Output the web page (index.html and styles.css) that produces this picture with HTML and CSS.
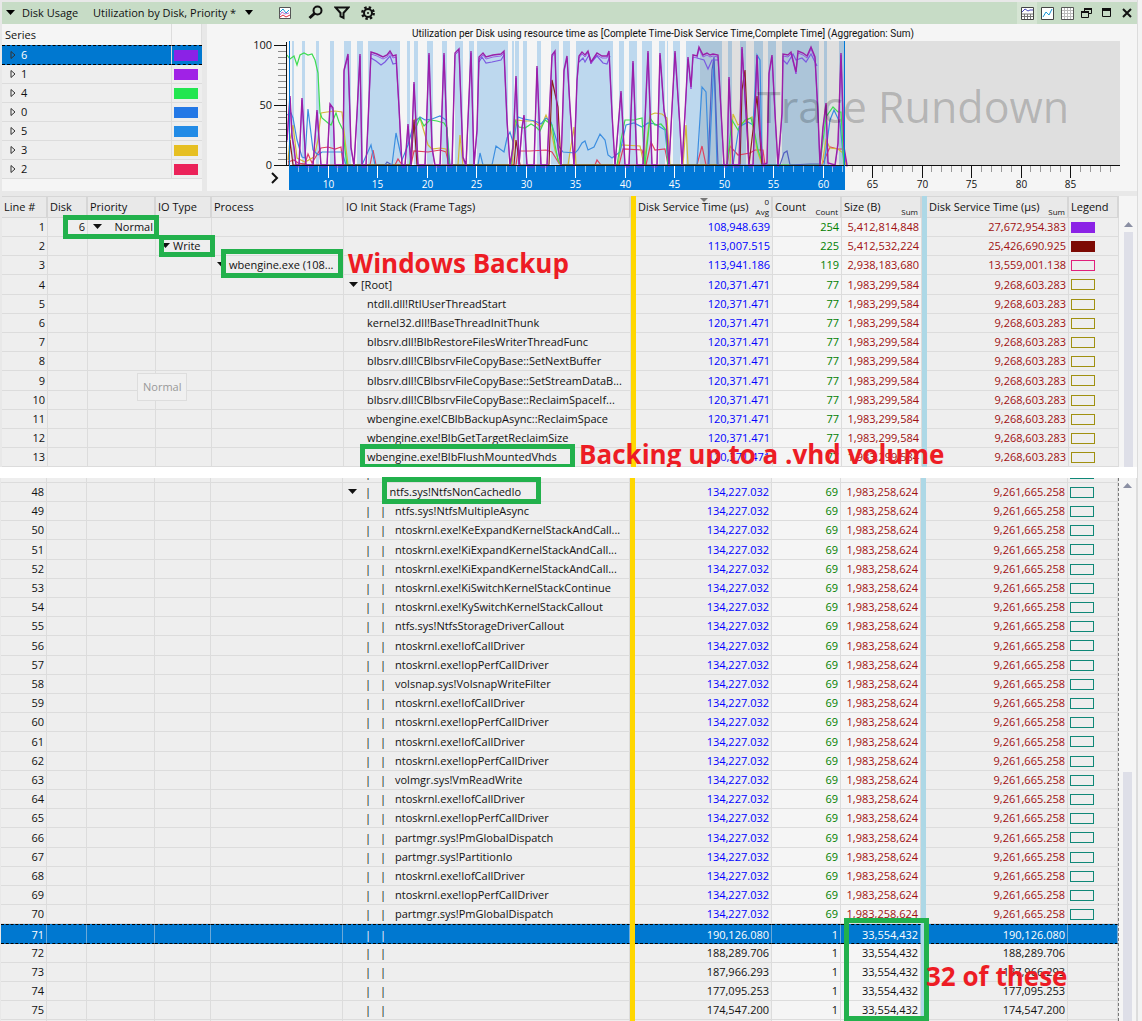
FILE: index.html
```html
<!DOCTYPE html>
<html lang="en">
<head>
<meta charset="utf-8">
<title>Disk Usage</title>
<link rel="stylesheet" href="styles.css">
</head>
<body>
<main class="window">
  <header class="toolbar">
    <button class="tool caret" aria-label="Collapse"><svg width="10" height="6"><path d="M0 0h9L4.500 5z"/></svg></button>
    <span class="title">Disk Usage</span>
    <button class="preset">Utilization by Disk, Priority * <svg width="10" height="6"><path d="M1 0h8L5 5z"/></svg></button>
    <div class="tools">
      <button class="tool" aria-label="Chart type"><svg width="14" height="14" fill="none"><path d="M1.500 1.500h11v11h-11z" fill="#fff" stroke="#555"/><path d="M2 6l3-3 3 4 3-3" stroke="#1b9ad6"/><path d="M2 9l2-3 3 2 4-1" stroke="#b06fd0"/><path d="M2 11l3-2 3 2 4-2" stroke="#e03040"/></svg></button>
      <button class="tool" aria-label="Search"><svg width="16" height="16" fill="none" stroke="#111"><circle cx="9.500" cy="5.500" r="4" stroke-width="2"/><path d="M6.500 8.500L1.500 13" stroke-width="3"/></svg></button>
      <button class="tool" aria-label="Filter"><svg width="16" height="14" fill="none" stroke="#111" stroke-width="2"><path d="M1.500 1.500h13L9.500 7v5l-3-1.500V7z"/></svg></button>
      <button class="tool" aria-label="Settings"><svg width="16" height="16" fill="none" stroke="#111"><circle cx="8" cy="8" r="4" stroke-width="2"/><circle cx="8" cy="8" r="5.700" stroke-width="2.400" stroke-dasharray="2.400 2.077"/><circle cx="8" cy="8" r="1" fill="#111" stroke="none"/></svg></button>
    </div>
    <div class="window-tools">
      <button class="tool active" aria-label="Graph and table"><svg width="13" height="13" fill="none"><path d="M.5.500h12v12H.5z" fill="#fff" stroke="#444"/><path d="M1 7h11M1 9.500h11M3.500 7v5M6.500 7v5M9.500 7v5" stroke="#777"/><path d="M1 5l3-3 3 2 2-1 3 0" stroke="#4a4ab8"/></svg></button>
      <button class="tool" aria-label="Graph"><svg width="13" height="13" fill="none"><path d="M.5.500h12v12H.5z" fill="#fff" stroke="#444"/><path d="M2 10l3-5 3 3 3-6" stroke="#1b9ad6"/></svg></button>
      <button class="tool" aria-label="Table"><svg width="13" height="13" fill="none"><path d="M.5.500h12v12H.5z" fill="#fff" stroke="#555"/><path d="M1 3.500h11M1 6.500h11M1 9.500h11M3.500 1v11M6.500 1v11M9.500 1v11" stroke="#bbb"/></svg></button>
      <button class="tool" aria-label="Restore"><svg width="12" height="12" fill="none" stroke="#111"><path d="M3.500 4V1.500h7v5H8"/><path d="M3 2h8M0 5h8" stroke-width="2"/><path d="M.5 5v5.500h7V5"/></svg></button>
      <button class="tool" aria-label="Maximize"><svg width="10" height="10" fill="none" stroke="#111"><path d="M.5 1v7.500h8V1"/><path d="M0 1.500h9" stroke-width="3"/></svg></button>
      <button class="tool" aria-label="Close"><svg width="10" height="10" fill="none" stroke="#111" stroke-width="2"><path d="M1 1l8 8M9 1L1 9"/></svg></button>
    </div>
  </header>
  <div class="upper">
    <div class="series">
      <table>
        <colgroup><col><col class="c-swatch"></colgroup>
        <thead><tr><th>Series</th><th></th></tr></thead>
        <tbody id="series"></tbody>
      </table>
    </div>
    <div class="graph"><svg id="graph" width="930" height="167" viewBox="207 24 930 167"></svg></div>
  </div>
  <section class="pane first">
    <table class="grid" id="top">
      <colgroup><col class="c-line"><col class="c-disk"><col class="c-priority"><col class="c-type"><col class="c-process"><col><col class="c-bar"><col class="c-avg"><col class="c-count"><col class="c-size"><col class="c-bar"><col class="c-sum"><col class="c-legend"></colgroup>
      <thead><tr><th>Line #</th><th>Disk</th><th>Priority</th><th>IO Type</th><th>Process</th><th>IO Init Stack (Frame Tags)</th><th class="gold"></th>
        <th><div class="head"><span>Disk Service Time (µs)</span><small>Avg</small><svg class="sort" width="8" height="4"><path d="M0 0h8L4 4z"/></svg><small class="order">0</small></div></th>
        <th><div class="head"><span>Count</span><small>Count</small></div></th><th><div class="head"><span>Size (B)</span><small>Sum</small></div></th><th class="sky"></th>
        <th><div class="head"><span>Disk Service Time (µs)</span><small>Sum</small></div></th><th>Legend</th></tr></thead>
      <tbody></tbody>
    </table>
    <div class="scroll"><svg width="9" height="5"><path d="M4.500 0L9 5H0z"/></svg><i></i></div>
    <div class="box box-disk"></div><div class="box box-write"></div><div class="box box-process"></div><div class="box box-flush"></div>
    <p class="note note-backup">Windows Backup</p>
    <p class="note note-vhd">Backing up to a .vhd volume</p>
    <span class="drag">Normal</span>
  </section>
  <section class="pane second">
    <div class="clip">
      <table class="grid" id="bottom">
        <colgroup><col class="c-line"><col class="c-disk"><col class="c-priority"><col class="c-type"><col class="c-process"><col><col class="c-bar"><col class="c-avg"><col class="c-count"><col class="c-size"><col class="c-bar"><col class="c-sum"><col class="c-legend"></colgroup>
        <tbody></tbody>
      </table>
    </div>
    <div class="scroll"><svg width="9" height="5"><path d="M4.500 0L9 5H0z"/></svg><i></i></div>
    <div class="box box-cached"></div><div class="box box-size"></div>
    <p class="note note-these">32 of these</p>
  </section>
</main>
<script src="app.js"></script>
</body>
</html>
```
FILE: styles.css
```css
* { box-sizing: border-box; }
body {
  margin: 0;
  height: 100vh;
  background: #f3f3f3;
  color: #111;
  font: 11px/18px "Open Sans", "Noto Sans", sans-serif;
}
button { font: inherit; color: inherit; border: 0; padding: 0; background: none; }
p { margin: 0; }
table { width: 100%; border-collapse: separate; border-spacing: 0; table-layout: fixed; }
th { font-weight: normal; text-align: left; }
td, th { padding: 0; white-space: nowrap; overflow: hidden; }

.window {
  display: flex;
  flex-direction: column;
  height: 100vh;
  margin-right: 4px;
  padding-top: 2px;
  overflow: hidden;
  background: #e8e8e8;
  border-right: 1px solid #dcdcdc;
}

/* toolbar */
.toolbar {
  display: flex;
  align-items: center;
  flex: none;
  height: 22px;
  margin-left: 2px;
  padding-left: 4px;
  background: #c7dcc6;
}
.toolbar svg { display: block; }
.title { margin-left: 7px; width: 71px; }
.preset { display: flex; align-items: center; gap: 8px; width: 185px; }
.caret { width: 9px; }
.tools { display: flex; align-items: center; gap: 10px; }
.tools .tool:first-child { margin-right: 6px; }
.window-tools { display: flex; align-items: center; margin-left: auto; }
.window-tools .tool { display: flex; align-items: center; justify-content: center; width: 20px; height: 22px; }
.window-tools .active { background: #d6e5d4; }

/* series list and graph */
.upper { display: flex; gap: 5px; flex: none; height: 167px; margin-left: 2px; }
.series { flex: none; width: 200px; background: #f5f5f5; }
.series th { height: 21px; padding-left: 3px; border-right: 1px solid #ddd; }
.c-swatch { width: 30px; }
.series td { height: 19px; padding-left: 8px; background: #eee; border-right: 1px solid #dcdcdc; border-bottom: 1px solid #dcdcdc; }
.series td svg { margin-right: 5px; fill: none; stroke: #333; }
.series td:last-child { padding-left: 2px; border-right: 0; }
.series .selected td { height: 20px; border-top: 1px dashed #000; border-bottom: 1px dashed #000; }
.swatch { display: block; width: 24px; height: 11px; border: 1px solid; }
.graph { flex: 1; min-width: 0; overflow: hidden; background: #f5f5f5; }
.graph svg { display: block; }
.graph text { font-size: 10px; fill: #111; }
.graph .mid { text-anchor: middle; }
.graph .end { text-anchor: end; font-size: 11px; }
.graph .inverse { fill: #fff; }
.graph .caption { font-family: Roboto, sans-serif; }
.graph .phase { font-size: 43px; fill: #000; fill-opacity: 0.2; }

/* data grid */
.pane { position: relative; display: flex; align-items: stretch; overflow: hidden; }
.first { flex: none; margin-top: 5px; padding-left: 2px; }
.second { flex: 1; min-height: 0; margin-top: 11px; padding-left: 1px; box-shadow: 0 -11px #fff; overflow: visible; clip-path: inset(-11px 0 0 0); }
.clip { flex: 1; min-width: 0; overflow: hidden; border-right: 1px dashed #777; box-shadow: inset 1px 0 #999; }
.second .grid { margin-top: -14px; }
.c-line { width: 46px; }
.c-disk { width: 40px; }
.c-priority { width: 68px; }
.c-type { width: 56px; }
.c-process { width: 132px; }
.c-bar { width: 5px; }
.c-avg { width: 137px; }
.c-count { width: 69px; }
.c-size { width: 80px; }
.c-sum { width: 142px; }
.c-legend { width: 50px; }
.first .grid { flex: 1; min-width: 0; }
.grid th { height: 22px; padding: 0 2px; background: #e9e9e9; border: 1px solid #d6d6d6; border-left: 0; border-right-width: 2px; }
.grid td { height: 19px; padding: 0 2px; background: #eee; border-right: 1px solid #dcdcdc; border-bottom: 1px solid #dcdcdc; text-overflow: ellipsis; }
.first tbody tr:nth-child(5n+4) td, .second tbody tr:nth-child(5n+5) td { height: 20px; }
.grid td:nth-child(1), .grid td:nth-child(2), .grid td:nth-child(n+8):nth-child(-n+12) { text-align: right; }
.grid td:nth-child(9), .grid td:nth-child(10) { background: #f5f5f5; }
.grid td:nth-child(8) { color: #00f; }
.grid td:nth-child(9) { color: #008000; }
.grid td:nth-child(10), .grid td:nth-child(12) { color: #a01010; }
.grid .plain td { color: #111; }
.grid .gold, .grid td:nth-child(7) { padding: 0; background: #ffd700; border: 0; }
.grid .sky, .grid td:nth-child(11) { padding: 0; background: #add8e6; border: 0; }
.grid .selected td, .series .selected td { color: #fff; background-color: #0078d0; }
.grid .selected td { border-top: 1px dashed #000; border-bottom: 1px dashed #000; border-right-color: #6ca9d8; line-height: 17px; }
.grid .selected td:nth-child(7) { background: #ffd700; border: 0; }
.grid .selected td:nth-child(11) { background: #add8e6; border: 0; }
.head { position: relative; display: flex; justify-content: space-between; align-items: baseline; }
.head small { font-size: 8px; line-height: 8px; align-self: flex-end; }
.head .order { position: absolute; top: 0; right: 0; }
.head .sort { position: absolute; top: 0; left: 62px; fill: #777; }
.arrow { display: inline-block; width: 12px; }
.arrow svg { display: inline-block; vertical-align: 2px; fill: #111; }
.tree { padding-left: 3px; }
.lead { display: flex; align-items: center; padding-left: 3px; }
.lead b { flex: 1; padding-left: 4px; font-weight: normal; }
.frame { padding-left: 21px; }
.rail { display: inline-block; width: 15px; }
.rails { padding-left: 20px; }
.rails.open { padding-left: 3px; }
.rails.open .arrow { width: 17px; }
.rails.open .rail { width: 18px; }
.scroll { flex: none; width: 18px; padding: 26px 4px 0 5px; background: #f5f5f5; }
.scroll svg { display: block; fill: #8a8fa3; }
.scroll i { display: block; width: 9px; height: 100%; margin-top: 5px; background: #dedfe8; }
.second .scroll { padding-top: 5px; border-right: 1px solid #ddd; padding-left: 4px; overflow: hidden; }
.second .scroll i { margin-top: 284px; }

/* call-outs over the grid */
.box { position: absolute; border: 5px solid #22b14c; }
.box-disk { left: 63px; top: 19px; width: 96px; height: 24px; }
.box-write { left: 159px; top: 39px; width: 56px; height: 22px; }
.box-process { left: 221px; top: 53px; width: 122px; height: 29px; }
.box-flush { left: 360px; top: 248px; width: 215px; height: 25px; }
.box-cached { left: 382px; top: -1px; width: 159px; height: 27px; }
.box-size { right: 208px; top: 440px; width: 85px; height: 103px; }
.note { position: absolute; color: #ed1c24; font-size: 26px; font-weight: bold; line-height: 34px; white-space: nowrap; }
.note-backup { left: 348px; top: 50px; }
.note-vhd { left: 579px; top: 241px; }
.note-these { left: 926px; top: 481px; }
.drag { position: absolute; left: 137px; top: 177px; padding: 4px 5px; color: #999; background: #f0f0f0; border: 1px solid #ddd; }
```
FILE: app.js
```js
const DOWN = '<span class="arrow"><svg width="9" height="5"><path d="M0 0h9L4.500 5z"/></svg></span>';

// series list
const series = [[6, '#8b22e6'], [1, '#a022e6'], [4, '#22e650'], [0, '#2378e6'], [5, '#228be6'], [3, '#e6bf22'], [2, '#eb2259']];
document.getElementById('series').innerHTML = series.map(([id, color], i) =>
  `<tr${i ? '' : ' class="selected"'}><td><svg width="6" height="8"><path d="M1 .5v7L5 4z"/></svg>${id}</td>` +
  `<td><span class="swatch" style="background:${color};color:${color}"></span></td></tr>`).join('');

// grid rows
function row(line, cells, stack, values, legend, cls) {
  const [avg, count, size, sum] = values;
  const lead = cells.map(c => `<td>${c}</td>`).join('');
  return `<tr class="${cls || ''}"><td>${line}</td>${lead}<td>${stack}</td><td></td><td>${avg}</td><td>${count}</td><td>${size}</td><td></td><td>${sum}</td><td>${legend}</td></tr>`;
}
const swatch = (color, fill) => `<span class="swatch" style="color:${color}${fill ? ';background:' + color : ''}"></span>`;
const none = ['', '', '', ''];
const root = ['120,371.471', 77, '1,983,299,584', '9,268,603.283'];
const frames = ['ntdll.dll!RtlUserThreadStart', 'kernel32.dll!BaseThreadInitThunk', 'blbsrv.dll!BlbRestoreFilesWriterThreadFunc',
  'blbsrv.dll!CBlbsrvFileCopyBase::SetNextBuffer', 'blbsrv.dll!CBlbsrvFileCopyBase::SetStreamDataB...', 'blbsrv.dll!CBlbsrvFileCopyBase::ReclaimSpaceIf...',
  'wbengine.exe!CBlbBackupAsync::ReclaimSpace', 'wbengine.exe!BlbGetTargetReclaimSize', 'wbengine.exe!BlbFlushMountedVhds'];
let top1 = row(1, [6, `<div class="lead">${DOWN}<b>&nbsp;&nbsp;Normal</b></div>`, '', ''], '', ['108,948.639', 254, '5,412,814,848', '27,672,954.383'], swatch('#8b22e6', true));
top1 += row(2, ['', '', `<div class="tree">${DOWN}Write</div>`, ''], '', ['113,007.515', 225, '5,412,532,224', '25,426,690.925'], swatch('#7d0a04', true));
top1 += row(3, ['', '', '', `<div class="tree">${DOWN}wbengine.exe (108...</div>`], '', ['113,941.186', 119, '2,938,183,680', '13,559,001.138'], swatch('#e0207c'));
top1 += row(4, none, `<div class="tree">${DOWN}[Root]</div>`, root, swatch('#a09010'));
frames.forEach((f, i) => { top1 += row(5 + i, none, `<div class="frame">${f}</div>`, root, swatch('#a09010')); });
document.querySelector('#top tbody').innerHTML = top1;

const RAIL = '<span class="rail">|</span>';
const cached = ['134,227.032', 69, '1,983,258,624', '9,261,665.258'];
const calls = ['ntfs.sys!NtfsMultipleAsync', 'ntoskrnl.exe!KeExpandKernelStackAndCall...', 'ntoskrnl.exe!KiExpandKernelStackAndCall...',
  'ntoskrnl.exe!KiExpandKernelStackAndCall...', 'ntoskrnl.exe!KiSwitchKernelStackContinue', 'ntoskrnl.exe!KySwitchKernelStackCallout',
  'ntfs.sys!NtfsStorageDriverCallout', 'ntoskrnl.exe!IofCallDriver', 'ntoskrnl.exe!IopPerfCallDriver', 'volsnap.sys!VolsnapWriteFilter',
  'ntoskrnl.exe!IofCallDriver', 'ntoskrnl.exe!IopPerfCallDriver', 'ntoskrnl.exe!IofCallDriver', 'ntoskrnl.exe!IopPerfCallDriver',
  'volmgr.sys!VmReadWrite', 'ntoskrnl.exe!IofCallDriver', 'ntoskrnl.exe!IopPerfCallDriver', 'partmgr.sys!PmGlobalDispatch',
  'partmgr.sys!PartitionIo', 'ntoskrnl.exe!IofCallDriver', 'ntoskrnl.exe!IopPerfCallDriver', 'partmgr.sys!PmGlobalDispatch'];
let rows = row('', none, `<div class="rails">${RAIL}</div>`, cached, swatch('#108878'));
rows += row(48, none, `<div class="rails open">${DOWN}${RAIL}- ntfs.sys!NtfsNonCachedIo</div>`, cached, swatch('#108878'));
calls.forEach((f, i) => { rows += row(49 + i, none, `<div class="rails">${RAIL}${RAIL}${f}</div>`, cached, swatch('#108878')); });
['190,126.080', '188,289.706', '187,966.293', '177,095.253', '174,547.200'].forEach((v, i) => {
  rows += row(71 + i, none, `<div class="rails">${RAIL}${RAIL}</div>`, [v, 1, '33,554,432', v], '', i ? 'plain' : 'selected');
});
rows += row('', none, '', ['', '', '', ''], '');
document.querySelector('#bottom tbody').innerHTML = rows;

// graph: 9.9px per second, 1.2px per percent
const timeX = t => 328 + (t - 10) * 9.9;
const bands = [[292,2],[302,3],[316,3],[330,4],[344,7],[357,6],[368,32],[407,3],[414,4],[427,6],[442,5],[455,8],[469,5],[477,31],[512,2],[515,4],[523,4],[537,4],[551,8],[563,7],[576,37],[619,5],[629,8],[642,10],[659,6],[667,1],[673,7],[686,36],[728,4],[740,6],[754,9],[768,8],[782,37],[824,3],[839,6]];
const usage = '287,140 290,96 292,136 294,147 296,165 299,165 302,98 306,165 313,165 317,110 321,165 327,165 330,104 333,108 335,165 343,165 344,70 348,54 351,147 354,165 357,113 360,54 362,165 366,165 368,123 371,52 377,54 383,57 387,55 390,51 393,56 396,55 399,107 402,165 405,165 408,124 411,165 414,82 418,165 425,165 429,53 432,147 435,165 440,165 444,53 448,165 452,165 455,53 459,49 463,157 466,165 471,51 474,165 477,130 479,57 483,53 486,57 493,55 501,54 504,51 507,120 510,165 513,147 516,76 519,165 522,127 524,115 527,165 534,165 537,66 541,165 547,165 552,55 555,51 558,147 561,165 564,70 567,56 570,107 574,165 577,80 579,56 582,52 585,55 588,51 591,62 597,53 602,56 607,56 609,51 612,113 615,165 621,91 625,165 629,165 633,61 637,165 643,165 648,51 652,165 657,165 660,53 664,110 666,120 669,165 675,51 680,127 682,165 685,113 688,57 691,87 693,55 697,56 699,47 703,55 707,53 710,55 713,54 718,55 721,110 724,165 727,165 729,77 733,165 739,165 742,47 746,113 749,165 753,165 757,55 760,130 763,165 767,163 769,73 772,55 775,113 778,165 782,113 783,54 788,55 791,52 796,72 798,51 803,53 807,56 811,47 815,57 818,113 820,165 823,127 826,103 828,163 835,165 838,143 841,53 844,147 847,165';
const lines = [
  ['#e04060', '288,162 294,160 298,163 305,164 308,154 312,163 321,148 328,147 335,149 341,147 343,165 370,165 373,150 376,165 395,165 398,159 402,165 411,165 414,151 428,152 440,150 446,152 449,165 516,165 518,151 530,151 546,150 552,152 560,165 595,165 597,160 601,165 619,165 623,149 642,150 646,165 651,142 655,150 665,149 668,165 697,165 702,146 706,165 727,165 730,146 738,155 750,153 755,150 763,150 765,165 822,165 830,147 838,149 843,149 846,165'],
  ['#d2b938', '288,160 290,140 293,125 297,158 305,162 314,157 318,140 321,113 327,112 335,111 342,112 345,140 348,165 410,165 414,120 420,118 428,145 432,149 440,148 446,149 450,165 458,165 460,135 463,165 512,165 516,120 525,121 533,121 541,127 546,115 550,125 555,150 560,165 568,165 574,127 576,165 618,165 621,145 640,146 644,165 650,115 655,113 662,114 667,118 670,165 683,165 686,125 688,165 730,165 733,114 738,125 744,122 752,117 757,150 762,165 822,165 826,140 830,148 838,149 843,153 846,165'],
  ['#3c8ee0', '287,115 291,113 293,118 297,140 302,157 305,158 308,109 313,150 318,155 322,152 342,152 346,165 362,165 371,145 375,165 392,165 396,133 402,160 408,145 414,123 420,117 425,120 432,119 440,116 446,120 450,165 478,165 480,153 483,165 492,165 496,146 504,152 507,138 510,132 513,142 518,117 524,119 535,121 541,124 546,118 551,122 558,145 563,152 575,153 578,150 582,143 585,141 588,150 594,147 600,134 605,140 608,155 612,158 620,152 626,125 634,123 642,127 648,123 655,124 660,127 665,130 668,165 697,165 702,87 706,92 709,165 714,60 717,165 733,165 739,127 748,122 753,125 757,55 760,60 762,165 824,165 830,120 834,110 840,123 844,165'],
  ['#3edb52', '287,55 290,59 294,56 297,65 300,55 304,53 308,55 312,54 315,60 318,73 320,113 322,118 328,123 331,125 336,113 339,122 343,130 345,150 347,165 410,165 412,135 417,125 420,118 424,126 430,120 437,121 444,123 447,128 449,165 511,165 515,120 519,127 525,128 531,124 536,127 540,131 545,120 552,125 555,145 558,160 561,165 617,165 621,140 625,120 634,120 642,118 645,165 650,118 655,125 661,124 666,130 668,165 727,165 732,120 738,130 745,120 751,118 755,135 758,150 763,165 820,165 826,117 833,107 838,112 841,112 844,165'],
  ['#8b2020', '289,165 290,140 293,165 411,165 414,120 417,165 514,165 516,140 520,165 549,165 552,80 558,107 561,165 740,165 742,90 745,70 749,165 753,130 757,96 762,165'],
  ['#5560c0', '385,165 387,162 392,165'],
  ['#5560c0', '708,165 712,70 714,57 718,165 780,165 784,153 787,151 790,165 810,164 819,164'],
  ['#7b5ae0', '371,58 376,61 381,65 385,62 390,56 393,64 397,63'],
  ['#7b5ae0', '479,62 482,57 486,63 492,62 501,60 504,55'],
  ['#7b5ae0', '579,62 583,58 585,62 589,55 591,62 597,56 603,63 607,64 610,56'],
  ['#7b5ae0', '697,58 704,60 708,69 712,60 718,60'],
  ['#7b5ae0', '783,60 787,64 793,54 796,60 802,58 806,62 811,54 817,66']
];
let g = bands.map(([x, w]) => `<rect x="${x}" y="41" width="${w}" height="124" fill="#bdd8ee"/>`).join('');
g += '<rect x="700" y="41" width="420" height="124" fill="#000" fill-opacity="0.086"/>';
g += '<rect x="289" y="166" width="556" height="24" fill="#0078d7"/>';
for (let v = 0; v <= 100; v += 5) {
  const y = 165.5 - v * 1.2, big = v % 50 === 0;
  g += `<path d="M${big ? 274 : 278} ${Math.floor(y) + 0.5}H286" stroke="${big ? '#111' : '#888'}"/>`;
  if (big) g += `<text class="end" x="272" y="${Math.floor(y) + 4}">${v}</text>`;
}
for (let t = 7; t < 90; t++) {
  const x = Math.floor(timeX(t)) + 0.5, big = t % 5 === 0, inside = x < 845;
  g += `<path d="M${x} 166v${big ? 12 : 6}" stroke="${inside ? (big ? '#fff' : '#8cc0ee') : (big ? '#111' : '#999')}"/>`;
  if (big) g += `<text class="mid${inside ? ' inverse' : ''}" x="${x}" y="188">${t}</text>`;
}
g += lines.map(([c, p]) => `<polyline points="${p}" fill="none" stroke="${c}" stroke-width="1.2"/>`).join('');
g += `<polyline points="${usage}" fill="none" stroke="#8a2be2" stroke-opacity="0.7" transform="translate(0 2)"/><polyline points="${usage}" fill="none" stroke="#9b1fa8" stroke-width="1.4"/>`;
g += '<path d="M286 165.500H1120M286.500 42v124" stroke="#111" fill="none"/>';
g += '<path d="M289.500 41v125M844.500 41v125" stroke="#0078d7"/><text class="phase" x="757" y="123">Trace Rundown</text>';
g += '<text class="mid caption" x="663" y="37">Utilization per Disk using resource time as [Complete Time-Disk Service Time,Complete Time] (Aggregation: Sum)</text>';
g += '<path d="M272 173l5 5-5 5" fill="none" stroke="#111" stroke-width="2"/>';
document.getElementById('graph').innerHTML = g;
```
